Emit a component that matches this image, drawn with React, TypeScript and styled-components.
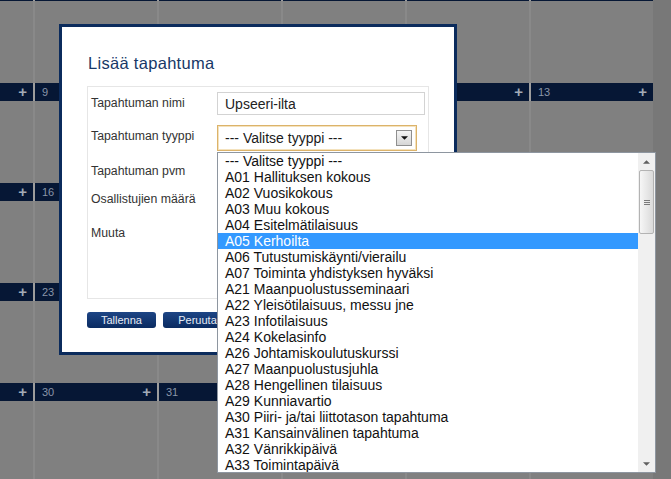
import { FC } from "react";
import styled, { createGlobalStyle } from "styled-components";

// first week only peeks in at the very top, its labels sit above the page
const weeks: (number | null)[][] = [
  [null, null, null, null, null, null],
  [8, 9, 10, 11, 12, 13],
  [15, 16, 17, 18, 19, 20],
  [22, 23, 24, 25, 26, 27],
  [29, 30, 31, null, null, null],
];

const types = [
  "--- Valitse tyyppi ---",
  "A01 Hallituksen kokous",
  "A02 Vuosikokous",
  "A03 Muu kokous",
  "A04 Esitelmätilaisuus",
  "A05 Kerhoilta",
  "A06 Tutustumiskäynti/vierailu",
  "A07 Toiminta yhdistyksen hyväksi",
  "A21 Maanpuolustusseminaari",
  "A22 Yleisötilaisuus, messu jne",
  "A23 Infotilaisuus",
  "A24 Kokelasinfo",
  "A26 Johtamiskoulutuskurssi",
  "A27 Maanpuolustusjuhla",
  "A28 Hengellinen tilaisuus",
  "A29 Kunniavartio",
  "A30 Piiri- ja/tai liittotason tapahtuma",
  "A31 Kansainvälinen tapahtuma",
  "A32 Vänrikkipäivä",
  "A33 Toimintapäivä",
];

const ACTIVE = 5;

const Triangle: FC<{ down?: boolean; size?: number; color?: string }> = ({
  down,
  size = 7,
  color = "#555",
}) => (
  <svg width={size} height={Math.ceil(size / 2)} viewBox="0 0 8 4">
    <path d={down ? "M0 0H8L4 4Z" : "M0 4H8L4 0Z"} fill={color} />
  </svg>
);

const App: FC = () => (
  <Screen>
    <GlobalStyle />
    <Calendar>
      {weeks.map((week, w) => (
        <Week key={`week-${w}`}>
          {week.map((day, d) => (
            <Day key={`day-${w}-${d}`}>
              <DayHead>
                {w > 0 && (
                  <>
                    <DayNumber>{day ?? ""}</DayNumber>
                    <AddMark>+</AddMark>
                  </>
                )}
              </DayHead>
              <DayBody />
            </Day>
          ))}
        </Week>
      ))}
    </Calendar>

    <Dialog>
      <Title>Lisää tapahtuma</Title>
      <Form>
        <Row $h={33}>
          <Label>Tapahtuman nimi</Label>
          <TextInput defaultValue="Upseeri-ilta" />
        </Row>
        <Row $h={35}>
          <Label>Tapahtuman tyyppi</Label>
          <SelectWrap>
            <SelectBox>
              <span>--- Valitse tyyppi ---</span>
              <ArrowButton>
                <Triangle down size={7} color="#111" />
              </ArrowButton>
            </SelectBox>
            <DropList>
              <Options>
                {types.map((t, idx) => (
                  <Option key={t} $active={idx === ACTIVE}>
                    {t}
                  </Option>
                ))}
              </Options>
              <Scrollbar>
                <ScrollArrow>
                  <Triangle size={7} color="#606060" />
                </ScrollArrow>
                <Thumb>
                  <Grip />
                  <Grip />
                  <Grip />
                </Thumb>
                <Track />
                <ScrollArrow>
                  <Triangle down size={7} color="#606060" />
                </ScrollArrow>
              </Scrollbar>
            </DropList>
          </SelectWrap>
        </Row>
        <Row $h={28}>
          <Label>Tapahtuman pvm</Label>
          <SmallInput />
        </Row>
        <Row $h={34}>
          <Label>Osallistujien määrä</Label>
          <SmallInput />
        </Row>
        <Row $h={70}>
          <Label>Muuta</Label>
          <TextArea />
        </Row>
      </Form>
      <ButtonRow>
        <Button>Tallenna</Button>
        <Button>Peruuta</Button>
      </ButtonRow>
    </Dialog>
  </Screen>
);

export default App;

const GlobalStyle = createGlobalStyle`
  html, body {
    margin: 0;
    padding: 0;
    background: #787878;
  }
  body {
    font-family: "Liberation Sans", Arial, sans-serif;
  }
`;

const Screen = styled.div`
  position: relative;
  width: 671px;
  height: 479px;
  overflow: hidden;
  background: #787878;
`;

const Calendar = styled.div`
  display: flex;
  flex-direction: column;
  width: 744px;
  margin: -17px 0 0 -91px;
`;

const Week = styled.div`
  display: flex;
  height: 100px;
`;

const Day = styled.div`
  display: flex;
  flex-direction: column;
  width: 124px;
  background: #808080;
`;

const DayHead = styled.div`
  display: flex;
  align-items: center;
  justify-content: space-between;
  height: 18px;
  padding: 0 6px 0 7px;
  border-left: 2px solid #9d9d9d;
  background: #061735;
  font-size: 11px;
  color: #8a95a8;
`;

const DayNumber = styled.span`
  line-height: 18px;
`;

const AddMark = styled.span`
  font-size: 15px;
  font-weight: bold;
  line-height: 18px;
  color: #a3aab6;
`;

const DayBody = styled.div`
  flex: 1;
  border-left: 2px solid #898989;
`;

const Dialog = styled.div`
  position: absolute;
  left: 59px;
  top: 24px;
  width: 398px;
  height: 331px;
  box-sizing: border-box;
  padding: 26px 0 0 25px;
  border: 3px solid #0b2b5c;
  background: #ffffff;
`;

const Title = styled.h2`
  margin: 0 0 13px 1px;
  font-size: 16.5px;
  font-weight: normal;
  line-height: 20px;
  letter-spacing: 0.3px;
  color: #173867;
`;

const Form = styled.div`
  width: 342px;
  height: 213px;
  box-sizing: border-box;
  padding: 5px 3px;
  border: 1px solid #e6e6e6;
`;

const Row = styled.div<{ $h: number }>`
  display: flex;
  align-items: flex-start;
  height: ${({ $h }) => $h}px;
`;

const Label = styled.div`
  width: 126px;
  flex-shrink: 0;
  padding-top: 4px;
  font-size: 12.3px;
  line-height: 15px;
  color: #333333;
`;

const TextInput = styled.input`
  width: 208px;
  height: 23px;
  box-sizing: border-box;
  padding: 0 7px;
  border: 1px solid #d3d3d3;
  font-family: "Liberation Sans", Arial, sans-serif;
  font-size: 14px;
  color: #222222;
  outline: none;
`;

const SmallInput = styled(TextInput)`
  width: 160px;
  height: 20px;
`;

const TextArea = styled.textarea`
  width: 208px;
  height: 66px;
  box-sizing: border-box;
  border: 1px solid #d3d3d3;
  resize: none;
`;

const SelectWrap = styled.div`
  position: relative;
`;

const SelectBox = styled.div`
  display: flex;
  align-items: center;
  justify-content: space-between;
  width: 200px;
  height: 26px;
  box-sizing: border-box;
  padding: 0 4px 0 7px;
  border: 1px solid #dcb36a;
  box-shadow: inset 0 0 0 1px #f4e2bd;
  font-size: 14px;
  color: #1a1a1a;
`;

const ArrowButton = styled.div`
  display: flex;
  align-items: center;
  justify-content: center;
  width: 16px;
  height: 16px;
  box-sizing: border-box;
  border: 1px solid #8f8f8f;
  background: linear-gradient(#f5f5f5, #d6d6d6);
`;

const DropList = styled.div`
  position: absolute;
  top: 27px;
  left: 0;
  z-index: 2;
  display: flex;
  width: 439px;
  height: 321px;
  box-sizing: border-box;
  overflow: hidden;
  border: 1px solid #8e96a0;
  background: #ffffff;
`;

const Options = styled.div`
  flex: 1;
`;

const Option = styled.div<{ $active?: boolean }>`
  height: 16px;
  padding-left: 7px;
  font-size: 14px;
  line-height: 16px;
  white-space: nowrap;
  color: ${({ $active }) => ($active ? "#ffffff" : "#111111")};
  background: ${({ $active }) => ($active ? "#3399ff" : "transparent")};
`;

const Scrollbar = styled.div`
  display: flex;
  flex-direction: column;
  width: 17px;
  background: #f0f0f0;
`;

const ScrollArrow = styled.div`
  display: flex;
  align-items: center;
  justify-content: center;
  height: 17px;
  flex-shrink: 0;
`;

const Thumb = styled.div`
  display: flex;
  flex-direction: column;
  align-items: center;
  justify-content: center;
  gap: 1px;
  height: 64px;
  margin: 0 1px;
  box-sizing: border-box;
  border: 1px solid #b3b3b3;
  border-radius: 2px;
  background: linear-gradient(to right, #f6f6f6, #dadada);
`;

const Grip = styled.div`
  width: 6px;
  height: 1px;
  background: #7a7a7a;
`;

const Track = styled.div`
  flex: 1;
`;

const ButtonRow = styled.div`
  display: flex;
  gap: 7px;
  margin-top: 13px;
`;

const Button = styled.button`
  width: 69px;
  height: 16px;
  padding: 0;
  border: none;
  border-radius: 3px;
  background: linear-gradient(#1d4585, #0a2b61);
  font-family: "Liberation Sans", Arial, sans-serif;
  font-size: 11px;
  line-height: 16px;
  color: #e6ecf5;
`;
